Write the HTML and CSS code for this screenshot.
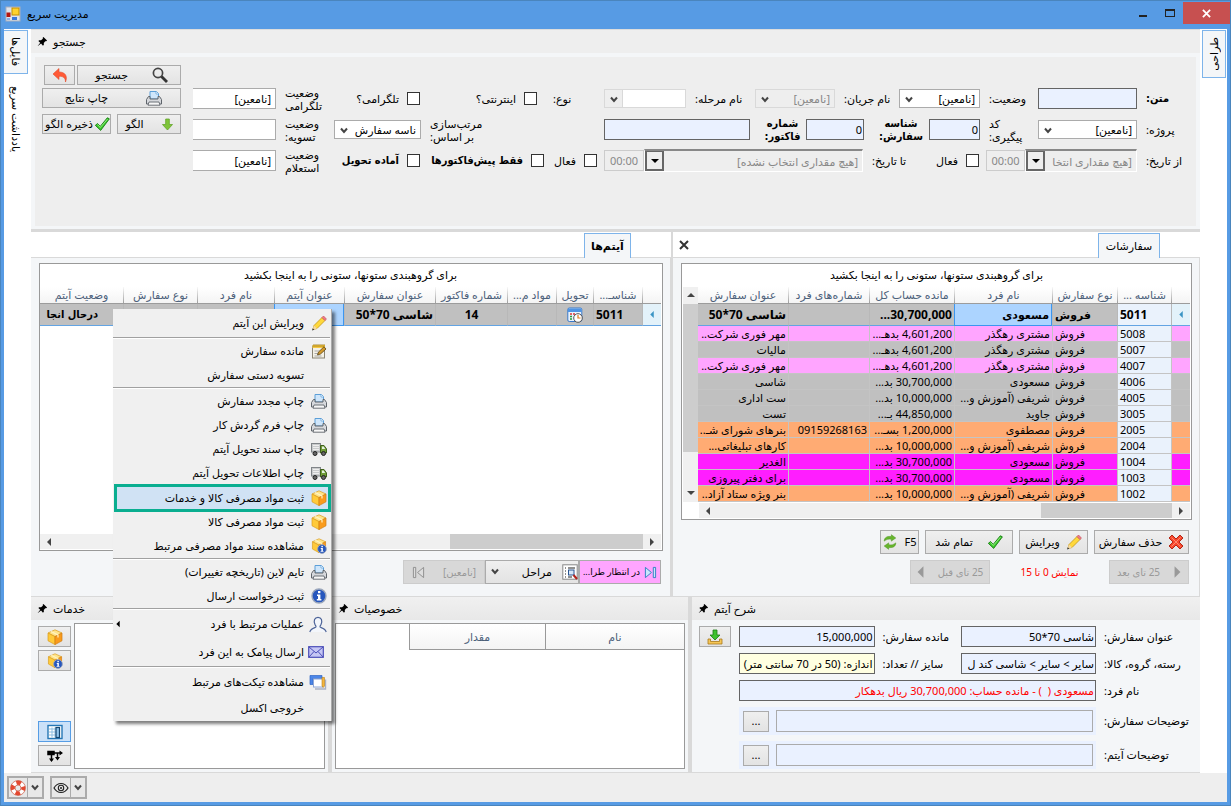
FILE: index.html
```html
<!DOCTYPE html>
<html lang="fa" dir="rtl">
<head>
<meta charset="utf-8">
<title>مدیریت سریع</title>
<link rel="stylesheet" href="styles.css">
</head>
<body>

<svg class="sprite" aria-hidden="true">
	<symbol id="i-app" viewBox="0 0 16 16"><rect x="1" y="1" width="14" height="14" fill="#dfe3ea" stroke="#a9b0bd"/><rect x="7" y="2" width="7" height="7" fill="#ffd22e" stroke="#c48f00"/><rect x="1.500" y="6.500" width="4" height="4.500" fill="#b3150f"/><rect x="7" y="11" width="5" height="3" fill="#3a78dc"/><path d="M2 13h3" stroke="#3a78dc"/></symbol>
	<symbol id="i-pin" viewBox="0 0 12 12"><path d="M7 1l4 4-1 .8-1-.2-1.600 2 .1 2L6.500 10.500 4.400 8.300 1 11 .8 10.800 3.500 7.400 1.500 5.500 2.400 4.600l2 .1 2-1.700L6.200 1.900z" fill="#000"/></symbol>
	<symbol id="i-undo" viewBox="0 0 16 16"><path d="M1 7l6-5.500V5c6 0 9 4 6.500 10C13.500 10.500 11 9.300 7 9.300v3.200z" fill="#ff5a36" stroke="#e04a2a" stroke-width=".6"/></symbol>
	<symbol id="i-search" viewBox="0 0 16 16"><circle cx="6" cy="6" r="4.600" fill="none" stroke="#444" stroke-width="1.700"/><path d="M9.500 9.500l5.500 5.500" stroke="#333" stroke-width="2.800"/></symbol>
	<symbol id="i-print" viewBox="0 0 16 16"><path d="M4 9V1.500h6.500L12.500 3.500V9z" fill="#cfe6fb" stroke="#5c9fd8"/><path d="M10 1.500V4h2.500" fill="#fff" stroke="#5c9fd8" stroke-width=".7"/><path d="M2.500 6.500h1.500V9h8V6.500h1.500l2 3v4.500h-15V9.500z" fill="#d6d8dc" stroke="#5f646b"/><path d="M3 12h10l1 3.200H2z" fill="#f7f7f7" stroke="#6d7278"/></symbol>
	<symbol id="i-down" viewBox="0 0 12 14"><path d="M4 1h4v6h3.500L6 13 .5 7H4z" fill="#7fc53a" stroke="#5fa025" stroke-width=".8"/></symbol>
	<symbol id="i-check" viewBox="0 0 18 16"><path d="M1.500 9.500L4 7.500l3 3.200L15 1l2.300 1.200L7.500 15.200z" fill="#3ccb2c" stroke="#147a10"/><path d="M4 8.500l3.100 3.400L15.200 2.500" fill="none" stroke="#a5f190" stroke-width=".9"/></symbol>
	<symbol id="i-cross" viewBox="0 0 16 16"><path d="M1 4l3-3 4 4 4-4 3 3-4 4 4 4-3 3-4-4-4 4-3-3 4-4z" fill="#f8472c" stroke="#b32716"/><path d="M3.500 3.500l9 9M12.500 3.500l-9 9" stroke="#ff9a80" stroke-width=".8"/></symbol>
	<symbol id="i-pencil" viewBox="0 0 16 16"><path d="M2 14.500L3 10.500 11 2.500l3 3-8 8z" fill="#ffd83b" stroke="#c29516" stroke-width=".8"/><path d="M11 2.500L12.500 1 15.400 4 14 5.500z" fill="#f27b86" stroke="#c5525f" stroke-width=".7"/><path d="M3 10.500l3 3-4.500 1.500z" fill="#f4d8a4"/><path d="M1 15.500l2.300-.8-1.500-1.500z" fill="#333"/></symbol>
	<symbol id="i-note" viewBox="0 0 16 16"><rect x="1.500" y="3" width="12" height="12" fill="#f4f1e6" stroke="#8b8574"/><path d="M1.500 2h12.500v3H1.500z" fill="#f6c842"/><path d="M3 1v3M5 1v3M7 1v3M9 1v3M11 1v3M13 1v3" stroke="#9b7410" stroke-width=".8"/><path d="M3.500 8h5M3.500 10.500h4M3.500 13h7" stroke="#aaa"/><path d="M6.500 12l1-3L13 3.800 15 6 9.500 11z" fill="#d3992a" stroke="#5b4415" stroke-width=".8"/></symbol>
	<symbol id="i-truck" viewBox="0 0 16 16"><rect x=".5" y="2.500" width="9" height="8.500" fill="#c9cbcc" stroke="#808488"/><path d="M2 4.500h6M2 6.500h6M2 8.500h6" stroke="#eee"/><path d="M9.500 4.500h3.500l2.500 3.500v4h-6z" fill="#6f9b37" stroke="#40611b"/><path d="M11 5.500h1.700l1.600 2.500H11z" fill="#e4f0e0"/><circle cx="4" cy="12.500" r="2" fill="#666" stroke="#222"/><circle cx="12.500" cy="12.500" r="2" fill="#666" stroke="#222"/></symbol>
	<symbol id="i-box" viewBox="0 0 16 16"><path d="M8 .8l7 3.200-7 3.600L1 4z" fill="#ffe48a" stroke="#d99b1d" stroke-width=".7"/><path d="M1 4l7 3.600v8L1 11.800z" fill="#ffca3a" stroke="#d99b1d" stroke-width=".7"/><path d="M15 4L8 7.600v8l7-3.800z" fill="#f99b1c" stroke="#d07d12" stroke-width=".7"/><path d="M4 2.500l7 3.400v2.600" fill="none" stroke="#fff4c4" stroke-width="1.200"/></symbol>
	<symbol id="i-info" viewBox="0 0 16 16"><circle cx="8" cy="8" r="7" fill="#2757bd" stroke="#9aa6bb" stroke-width="1.400"/><rect x="7" y="3" width="2.400" height="2.200" fill="#fff"/><path d="M6 6.500h3.400V11h1v1.500H5.800V11H7V8H6z" fill="#fff"/></symbol>
	<symbol id="i-boxinfo" viewBox="0 0 16 16"><use href="#i-box" width="16" height="15"/><use href="#i-info" x="6" y="6" width="10" height="10"/></symbol>
	<symbol id="i-user" viewBox="0 0 18 16"><path d="M.8 15.500C1.500 12.500 4 11.800 6.500 10.800 7.500 10.200 6.800 9.300 6 8 4.300 4.500 5.500.8 9 .8s4.700 3.700 3 7.200c-.8 1.300-1.500 2.200-.5 2.800 2.500 1 5 1.700 5.700 4.700" fill="#f3f6fb" stroke="#4c6398" stroke-width="1.200"/></symbol>
	<symbol id="i-mail" viewBox="0 0 16 12"><rect x=".7" y=".7" width="14.600" height="10.600" fill="#c5c6f4" stroke="#4a4db8" stroke-width="1.200"/><path d="M1 1l7 6 7-6M1 11l5-5.500M15 11l-5-5.500" fill="none" stroke="#4a4db8"/></symbol>
	<symbol id="i-ticket" viewBox="0 0 18 16"><path d="M1 1h12v3H4v6H1z" fill="#4c86e8" stroke="#2f66c4" stroke-width=".7"/><rect x="4.500" y="4.500" width="9" height="8" fill="#fff" stroke="#8fa7d6"/><path d="M6 14.500h10.500V5" fill="none" stroke="#a9b1c4" stroke-width="1.400"/><path d="M13 3h2.500v8.500L14.200 13 13 11.500z" fill="#f4b53d" stroke="#b7811e" stroke-width=".6"/></symbol>
	<symbol id="i-refresh" viewBox="0 0 16 18"><path d="M1.500 8C1.500 4 5 2 9.500 3V.8L14.500 4.500 9.500 8V6C6 5.300 4 6 1.500 8z" fill="#67b52c" stroke="#4c961c" stroke-width=".6"/><path d="M14.500 10c0 4-3.500 6-8 5v2.200L1.500 13.500l5-3.500v2c3.500.7 5.500 0 8-2z" fill="#67b52c" stroke="#4c961c" stroke-width=".6"/></symbol>
	<symbol id="i-import" viewBox="0 0 16 16"><path d="M1 10v5h14v-5h-2.500v2.500h-9V10z" fill="#f5c657" stroke="#a9781a" stroke-width=".8"/><path d="M6 1h4v5h3L8 11 3 6h3z" fill="#3fc12d" stroke="#1d7c14" stroke-width=".8"/></symbol>
	<symbol id="i-calendar" viewBox="0 0 16 16"><rect x=".8" y="1" width="14" height="13.500" rx="1.500" fill="#eaf3fd" stroke="#3978c8"/><path d="M1 1.500h13.600V5H1z" fill="#4f94e4"/><path d="M3 7h2M6 7h2" stroke="#d33" stroke-width="1.400"/><path d="M3 9.500h2M3 12h2" stroke="#2a9a3a" stroke-width="1.400"/><circle cx="11" cy="11" r="4.300" fill="#fff" stroke="#555"/><path d="M11 8v3h2.500" fill="none" stroke="#e07a18" stroke-width="1.200"/></symbol>
	<symbol id="i-find" viewBox="0 0 16 16"><rect x=".8" y=".8" width="14.400" height="14.400" fill="#fff" stroke="#888"/><path d="M3 4h1M3 7h1M3 10h1M3 13h1M6 4h7M6 13h4" stroke="#222" stroke-width="1.200"/><rect x="6.500" y="6" width="5.500" height="5" fill="#d5e6f8" stroke="#2a5590"/><path d="M11.500 11l3.500 4" stroke="#b3211a" stroke-width="2"/></symbol>
	<symbol id="i-next" viewBox="0 0 14 14"><path d="M1.500 1.500L8 7l-6.500 5.500zM10 1.500h2.500v11H10z" fill="#c8e6fb" stroke="#2d7cc0"/></symbol>
	<symbol id="i-prev" viewBox="0 0 14 14"><path d="M12.500 1.500L6 7l6.500 5.500zM4 1.500H1.500v11H4z" fill="#ddd" stroke="#8d8d8d"/></symbol>
	<symbol id="i-table" viewBox="0 0 16 15"><rect x="1" y="1" width="14" height="13" fill="#fff" stroke="#2577b5" stroke-width="1.400"/><path d="M2 4.500h7M2 7.500h7M2 10.500h7M5 3v10M8 3v10" stroke="#8dbfe3"/><rect x="9" y="3" width="3.500" height="10" fill="#8ec3ea" stroke="#14456e" stroke-width="1.200"/></symbol>
	<symbol id="i-flow" viewBox="0 0 16 12"><path d="M1 1.500h6v3H1zM7 3h7M4.500 4v7M10.500 3v6" fill="#000" stroke="#000" stroke-width="1.500"/><path d="M12.500.5L16 3l-3.500 2.500zM2 8.500h5L4.500 12zM8 7h5l-2.500 3.500z" fill="#000"/></symbol>
	<symbol id="i-help" viewBox="0 0 16 16"><circle cx="8" cy="8" r="5.300" fill="none" stroke="#fff" stroke-width="4.400"/><circle cx="8" cy="8" r="5.300" fill="none" stroke="#e5482f" stroke-width="4.200" stroke-dasharray="4.600 3.730" stroke-dashoffset="2.300"/><circle cx="8" cy="8" r="7.400" fill="none" stroke="#c9563f" stroke-width=".7"/><circle cx="8" cy="8" r="3" fill="none" stroke="#c9563f" stroke-width=".7"/></symbol>
	<symbol id="i-eye" viewBox="0 0 16 12"><path d="M1 6c3.500-6 10.500-6 14 0-3.500 6-10.500 6-14 0z" fill="none" stroke="#222" stroke-width="1.200"/><circle cx="8" cy="6" r="2.700" fill="none" stroke="#222" stroke-width="1.100"/><circle cx="8" cy="6" r="1" fill="#222"/></symbol>
	<symbol id="i-chev" viewBox="0 0 8 8"><path d="M1 1.500l3 3.500 3-3.500" fill="none" stroke="#444" stroke-width="2"/></symbol>
	<symbol id="i-left" viewBox="0 0 6 10"><path d="M5.500 0v10L.5 5z" fill="currentColor"/></symbol>
	<symbol id="i-right" viewBox="0 0 6 10"><path d="M.5 0v10l5-5z" fill="currentColor"/></symbol>
	<symbol id="i-up" viewBox="0 0 8 4"><path d="M0 4h8L4 0z" fill="#444"/></symbol>
	<symbol id="i-dn" viewBox="0 0 8 4"><path d="M0 0h8L4 4z" fill="currentColor"/></symbol>
	<symbol id="i-x" viewBox="0 0 10 10"><path d="M1 1l8 8M9 1L1 9" stroke="currentColor" stroke-width="2"/></symbol>
</svg>

<div class="window">
	<header class="titlebar">
		<svg class="icon"><use href="#i-app"/></svg>
		<h1>مدیریت سریع</h1>
		<div class="window-buttons">
			<button class="minimize" aria-label="minimize"><span></span></button>
			<button class="maximize" aria-label="maximize"><span></span></button>
			<button class="close" aria-label="close"><svg width="9" height="9"><use href="#i-x"/></svg></button>
		</div>
	</header>

	<div class="workspace">
		<nav class="rail rail-right"><button class="rail-tab active"><span>طراحی</span></button></nav>

		<main>
			<section class="panel search">
				<h2 class="panel-title">جستجو <svg class="pin"><use href="#i-pin"/></svg></h2>
				<div class="search-body">
					<form class="filters">
						<div class="filter-row row1">
							<label for="q" class="strong">متن:</label>
							<input id="q" class="blue" type="text">
							<label for="status">وضعیت:</label>
							<select id="status"><option>[نامعین]</option></select>
							<label for="flow">نام جریان:</label>
							<select id="flow" disabled><option>[نامعین]</option></select>
							<label for="stage">نام مرحله:</label>
							<select id="stage" class="flat"><option></option></select>
							<span class="caption">نوع:</span>
							<label class="check"><input type="checkbox"> اینترنتی؟</label>
							<label class="check"><input type="checkbox"> تلگرامی؟</label>
							<label for="tg">وضعیت<br>تلگرامی</label>
							<input id="tg" class="plain" type="text" value="[نامعین]">
						</div>
						<div class="filter-row row2">
							<label for="project">پروژه:</label>
							<select id="project"><option>[نامعین]</option></select>
							<label for="track">کد<br>پیگیری:</label>
							<input id="track" class="blue" type="text" value="0">
							<label for="order-id" class="strong mid">شناسه<br>سفارش:</label>
							<input id="order-id" class="blue" type="text" value="0">
							<label for="invoice" class="strong mid">شماره<br>فاکتور:</label>
							<input id="invoice" class="blue" type="text">
							<label for="sort">مرتب‌سازی<br>بر اساس:</label>
							<select id="sort"><option>ناسه سفارش</option></select>
							<label for="settle">وضعیت<br>تسویه:</label>
							<input id="settle" class="plain" type="text">
						</div>
						<div class="filter-row row3">
							<label for="from">از تاریخ:</label>
							<div class="date"><input id="from" type="text" value="[هیچ مقداری انتخا" disabled><button type="button" aria-label="از تاریخ"><svg width="8" height="4"><use href="#i-dn"/></svg></button></div>
							<input class="time" type="text" value="00:00" aria-label="ساعت" disabled>
							<label class="check"><input type="checkbox"> فعال</label>
							<label for="to">تا تاریخ:</label>
							<div class="date"><input id="to" type="text" value="[هیچ مقداری انتخاب نشده]" disabled><button type="button" aria-label="تا تاریخ"><svg width="8" height="4"><use href="#i-dn"/></svg></button></div>
							<input class="time" type="text" value="00:00" aria-label="ساعت" disabled>
							<label class="check"><input type="checkbox"> فعال</label>
							<label class="check strong"><input type="checkbox"> فقط پیش‌فاکتورها</label>
							<label class="check strong"><input type="checkbox"> آماده تحویل</label>
							<label for="inquiry">وضعیت<br>استعلام</label>
							<input id="inquiry" class="plain" type="text" value="[نامعین]">
						</div>
					</form>
					<div class="search-actions">
						<div class="line top"><button class="btn grow"><svg class="icon"><use href="#i-search"/></svg><span>جستجو</span></button><button class="btn undo" aria-label="بازگشت"><svg class="icon"><use href="#i-undo"/></svg></button></div>
						<div class="line"><button class="btn grow print"><svg class="icon"><use href="#i-print"/></svg><span>چاپ نتایج</span></button></div>
						<div class="line last"><button class="btn pattern"><svg class="arrow"><use href="#i-down"/></svg><span>الگو</span></button><button class="btn grow save"><svg class="icon"><use href="#i-check"/></svg><span>ذخیره الگو</span></button></div>
					</div>
				</div>
			</section>

			<div class="middle">
				<section class="panel orders">
					<div class="tabs"><button class="tab">سفارشات</button><button class="tab-close" aria-label="close"><svg width="10" height="10"><use href="#i-x"/></svg></button></div>
					<div class="tab-body">
						<div class="grid">
							<p class="group-hint">برای گروهبندی ستونها، ستونی را به اینجا بکشید</p>
							<div class="grid-scroll">
								<table>
									<colgroup><col class="c-mark"><col class="c-oid"><col class="c-type"><col class="c-name"><col class="c-balance"><col class="c-phone"><col></colgroup>
									<thead><tr><th></th><th>شناسه ...</th><th>نوع سفارش</th><th>نام فرد</th><th>مانده حساب کل</th><th>شماره‌های فرد</th><th>عنوان سفارش</th></tr></thead>
									<tbody>
										<tr class="selected"><td><svg width="6" height="7"><use href="#i-left"/></svg></td><td class="big-num">5011</td><td>فروش</td><td class="cell-active">مسعودی</td><td class="big-num">30,700,000...</td><td></td><td class="big-num">شاسی 70*50</td></tr>
										<tr class="pink"><td></td><td>5008</td><td>فروش</td><td>مشتری رهگذر</td><td>4,601,200 بدهـ...</td><td></td><td>مهر فوری شرکت..</td></tr>
										<tr><td></td><td>5007</td><td>فروش</td><td>مشتری رهگذر</td><td>4,601,200 بدهـ...</td><td></td><td>مالیات</td></tr>
										<tr class="pink"><td></td><td>4007</td><td>فروش</td><td>مشتری رهگذر</td><td>4,601,200 بدهـ...</td><td></td><td>مهر فوری شرکت..</td></tr>
										<tr><td></td><td>4006</td><td>فروش</td><td>مسعودی</td><td>30,700,000 بد...</td><td></td><td>شاسی</td></tr>
										<tr><td></td><td>4005</td><td>فروش</td><td>شریفی (آموزش و...</td><td>10,000,000 بد...</td><td></td><td>ست اداری</td></tr>
										<tr><td></td><td>3005</td><td>فروش</td><td>جاوید</td><td>44,850,000 بـ...</td><td></td><td>تست</td></tr>
										<tr class="orange"><td></td><td>2005</td><td>فروش</td><td>مصطفوی</td><td>1,200,000 بسـ...</td><td>09159268163</td><td>بنرهای شورای شـ..</td></tr>
										<tr class="orange"><td></td><td>2004</td><td>فروش</td><td>شریفی (آموزش و...</td><td>10,000,000 بد...</td><td></td><td>کارهای  تبلیغاتی...</td></tr>
										<tr class="magenta"><td></td><td>1004</td><td>فروش</td><td>مسعودی</td><td>30,700,000 بد...</td><td></td><td>الغدیر</td></tr>
										<tr class="magenta"><td></td><td>1003</td><td>فروش</td><td>مسعودی</td><td>30,700,000 بد...</td><td></td><td>برای دفتر پیروزی</td></tr>
										<tr class="orange"><td></td><td>1002</td><td>فروش</td><td>شریفی (آموزش و...</td><td>10,000,000 بد...</td><td></td><td>بنر ویژه ستاد آزاد..</td></tr>
									</tbody>
								</table>
								<div class="vscroll"><svg width="8" height="4"><use href="#i-up"/></svg><div class="thumb"></div><svg width="8" height="4"><use href="#i-dn"/></svg></div>
							</div>
							<div class="hscroll inset"><svg width="6" height="8"><use href="#i-right"/></svg><div class="thumb"></div><svg width="6" height="8"><use href="#i-left"/></svg></div>
						</div>
						<div class="actions">
							<button class="btn b-delete"><svg class="icon"><use href="#i-cross"/></svg><span>حذف سفارش</span></button>
							<button class="btn b-edit"><svg class="icon"><use href="#i-pencil"/></svg><span>ویرایش</span></button>
							<button class="btn b-done"><svg class="icon"><use href="#i-check"/></svg><span>تمام شد</span></button>
							<button class="btn b-f5"><span>F5</span><svg class="icon"><use href="#i-refresh"/></svg></button>
						</div>
						<div class="pager">
							<button class="btn" disabled><svg class="tri"><use href="#i-right"/></svg><span>25 تای بعد</span></button>
							<span class="range">نمایش 0 تا 15</span>
							<button class="btn" disabled><span>25 تای قبل</span><svg class="tri"><use href="#i-left"/></svg></button>
						</div>
					</div>
				</section>

				<section class="panel items">
					<div class="tabs"><button class="tab bold">آیتم‌ها</button></div>
					<div class="tab-body">
						<div class="grid">
							<p class="group-hint">برای گروهبندی ستونها، ستونی را به اینجا بکشید</p>
							<div class="grid-scroll">
								<table>
									<colgroup><col class="c-mark"><col class="c-iid"><col class="c-deliver"><col class="c-material"><col class="c-invoice"><col class="c-title"><col class="c-item"><col class="c-person"><col class="c-kind"><col></colgroup>
									<thead><tr><th></th><th>شناسـ...</th><th>تحویل</th><th>مواد م...</th><th>شماره فاکتور</th><th>عنوان سفارش</th><th>عنوان آیتم</th><th>نام فرد</th><th>نوع سفارش</th><th>وضعیت آیتم</th></tr></thead>
									<tbody>
										<tr class="selected"><td><svg width="6" height="7"><use href="#i-left"/></svg></td><td class="big-num">5011</td><td class="center"><svg class="icon"><use href="#i-calendar"/></svg></td><td></td><td class="center big-num">14</td><td class="big-num">شاسی 70*50</td><td class="cell-active"></td><td></td><td></td><td class="state">درحال انجا</td></tr>
									</tbody>
								</table>
							</div>
							<div class="hscroll"><svg width="6" height="8"><use href="#i-right"/></svg><div class="thumb"></div><svg width="6" height="8"><use href="#i-left"/></svg></div>
						</div>
						<div class="stages">
							<button class="btn waiting"><svg class="step"><use href="#i-next"/></svg><span>در انتظار طرا...</span></button>
							<button class="btn steps"><svg class="icon"><use href="#i-find"/></svg><span>مراحل</span><svg width="8" height="8"><use href="#i-chev"/></svg></button>
							<button class="btn unset" disabled><span>[نامعین]</span><svg class="step"><use href="#i-prev"/></svg></button>
						</div>
					</div>
				</section>
			</div>

			<div class="bottom">
				<section class="panel details">
					<h2 class="panel-title">شرح آیتم <svg class="pin"><use href="#i-pin"/></svg></h2>
					<div class="details-body">
						<label for="d-title">عنوان سفارش:</label>
						<input id="d-title" class="blue" type="text" value="شاسی 70*50">
						<label for="d-rest">مانده سفارش:</label>
						<input id="d-rest" class="blue" type="text" value="15,000,000">
						<button class="btn" aria-label="دریافت"><svg class="icon"><use href="#i-import"/></svg></button>

						<label for="d-cat">رسته، گروه، کالا:</label>
						<input id="d-cat" class="blue" type="text" value="سایر &gt; سایر &gt; شاسی کند ل">
						<label for="d-size">سایز // تعداد:</label>
						<input id="d-size" class="yellow" type="text" value="اندازه: (50 در 70 سانتی متر)">

						<label for="d-person" class="first">نام فرد:</label>
						<input id="d-person" class="blue red wide" type="text" value="مسعودی (  ) - مانده حساب: 30,700,000 ریال بدهکار">

						<label for="d-note1" class="first">توضیحات سفارش:</label>
						<div class="memo wide"><input id="d-note1" type="text"><button class="btn">...</button></div>

						<label for="d-note2" class="first">توضیحات آیتم:</label>
						<div class="memo wide"><input id="d-note2" type="text"><button class="btn">...</button></div>
					</div>
				</section>

				<section class="panel props">
					<h2 class="panel-title">خصوصیات <svg class="pin"><use href="#i-pin"/></svg></h2>
					<div class="props-body">
						<table class="props-table"><thead><tr><th class="p-name">نام</th><th class="p-value">مقدار</th><td></td></tr></thead></table>
					</div>
				</section>

				<section class="panel services">
					<h2 class="panel-title">خدمات <svg class="pin"><use href="#i-pin"/></svg></h2>
					<div class="services-body">
						<div class="list"></div>
						<div class="tools">
							<button class="btn" aria-label="کالا و خدمات"><svg class="icon"><use href="#i-box"/></svg></button>
							<button class="btn" aria-label="سند مواد"><svg class="icon"><use href="#i-boxinfo"/></svg></button>
							<button class="btn on push" aria-label="جدول"><svg class="icon"><use href="#i-table"/></svg></button>
							<button class="btn" aria-label="گردش"><svg class="icon"><use href="#i-flow"/></svg></button>
						</div>
					</div>
				</section>
			</div>

			<ul class="context-menu">
				<li class="tall"><button><svg><use href="#i-pencil"/></svg>ویرایش این آیتم</button></li>
				<li class="sep"></li>
				<li><button><svg><use href="#i-note"/></svg>مانده سفارش</button></li>
				<li><button><svg></svg>تسویه دستی سفارش</button></li>
				<li class="sep"></li>
				<li><button><svg><use href="#i-print"/></svg>چاپ مجدد سفارش</button></li>
				<li><button><svg><use href="#i-print"/></svg>چاپ فرم گردش کار</button></li>
				<li><button><svg><use href="#i-truck"/></svg>چاپ سند تحویل آیتم</button></li>
				<li><button><svg><use href="#i-truck"/></svg>چاپ اطلاعات تحویل آیتم</button></li>
				<li class="current"><button><svg><use href="#i-box"/></svg>ثبت مواد مصرفی کالا و خدمات</button></li>
				<li><button><svg><use href="#i-box"/></svg>ثبت مواد مصرفی کالا</button></li>
				<li><button><svg><use href="#i-boxinfo"/></svg>مشاهده سند مواد مصرفی مرتبط</button></li>
				<li class="sep"></li>
				<li><button><svg><use href="#i-print"/></svg>تایم لاین (تاریخچه تغییرات)</button></li>
				<li><button><svg><use href="#i-info"/></svg>ثبت درخواست ارسال</button></li>
				<li class="sep"></li>
				<li class="tall"><button><svg class="big"><use href="#i-user"/></svg>عملیات مرتبط با فرد<svg class="more"><use href="#i-left"/></svg></button></li>
				<li class="tall"><button><svg class="mail"><use href="#i-mail"/></svg>ارسال پیامک به این فرد</button></li>
				<li class="sep"></li>
				<li class="tall"><button><svg class="big"><use href="#i-ticket"/></svg>مشاهده  تیکت‌های مرتبط</button></li>
				<li><button><svg></svg>خروجی اکسل</button></li>
			</ul>
		</main>

		<nav class="rail rail-left">
			<button class="rail-tab active"><span>فایل‌ها</span></button>
			<button class="rail-tab"><span>یادداشت سریع</span></button>
		</nav>
	</div>

	<footer class="statusbar">
		<div class="split"><button aria-label="help"><svg width="16" height="16"><use href="#i-help"/></svg></button><button aria-label="more"><svg width="8" height="8"><use href="#i-chev"/></svg></button></div>
		<div class="split"><button aria-label="view"><svg width="16" height="12"><use href="#i-eye"/></svg></button><button aria-label="more"><svg width="8" height="8"><use href="#i-chev"/></svg></button></div>
	</footer>
</div>

</body>
</html>
```
FILE: styles.css
```css
* {
	box-sizing: border-box;
}
html, body {
	margin: 0;
	padding: 0;
	height: 100%;
}
/* Noto for digits and latin, DejaVu for the persian letters */
body, button, input, select {
	font-family: "Noto Sans", "DejaVu Sans", sans-serif;
	font-size: 11px;
	line-height: 14px;
	color: #000;
}
button, input, select {
	margin: 0;
	padding: 0;
	border-radius: 0;
}
h1, h2, p, ul {
	margin: 0;
	padding: 0;
	font-size: 11px;
	font-weight: normal;
}
ul {
	list-style: none;
}
svg {
	display: block;
	flex: none;
}
.sprite {
	position: absolute;
	width: 0;
	height: 0;
}
.icon {
	width: 16px;
	height: 16px;
}

/* window frame */
.window {
	display: flex;
	flex-direction: column;
	height: 100vh;
	min-height: 700px;
	border: 4px solid #579be4;
	border-top: 0;
	background: #fff;
	outline: 1px solid #4a85bd;
	outline-offset: -1px;
}
.titlebar {
	direction: ltr;
	display: flex;
	align-items: center;
	gap: 6px;
	flex: none;
	height: 29px;
	margin: 0 -4px;
	padding: 0 1px 2px 5px;
	background: #579be4;
	border-top: 1px solid #4a85bd;
}
.window-buttons {
	display: flex;
	align-self: flex-start;
	margin-left: auto;
	padding-top: 1px;
}
.window-buttons button {
	display: flex;
	align-items: center;
	justify-content: center;
	width: 27px;
	height: 22px;
	border: 0;
	background: none;
}
.minimize span {
	width: 8px;
	height: 2px;
	margin-top: 6px;
	background: #222;
}
.maximize span {
	width: 10px;
	height: 8px;
	border: 1px solid #222;
	border-top-width: 2px;
}
.window-buttons .close {
	width: 47px;
	background: #c75050;
	color: #fff;
}
.workspace {
	display: flex;
	flex: 1;
	min-height: 0;
}
main {
	position: relative;
	display: flex;
	flex-direction: column;
	flex: 1;
	min-width: 0;
	background: #d9d9d9;
	gap: 3px;
}
.rail {
	display: flex;
	flex-direction: column;
	align-items: flex-end;
	flex: none;
	width: 27px;
	padding-top: 1px;
	gap: 8px;
}
.rail-right {
	align-items: center;
}
.rail-tab {
	display: flex;
	align-items: center;
	justify-content: center;
	width: 24px;
	height: 74px;
	border: 1px solid transparent;
	background: none;
	writing-mode: vertical-rl;
	direction: rtl;
	white-space: nowrap;
}
.rail-tab.active {
	height: 44px;
	border-color: #7eb4ea;
	background: #f4f6f8;
}
.rail-left .active {
	border-left: 0;
}
.rail-right .active {
	height: 48px;
}
.rail-right span {
	transform: rotate(180deg);
}

/* panels */
.panel {
	display: flex;
	flex-direction: column;
	min-width: 0;
	background: #f4f6f8;
}
.panel-title {
	display: flex;
	align-items: center;
	justify-content: flex-end;
	flex: none;
	height: 23px;
	gap: 5px;
	padding-left: 6px;
	background: #eee;
}
.pin {
	width: 11px;
	height: 11px;
}
.btn {
	display: flex;
	align-items: center;
	justify-content: center;
	gap: 6px;
	height: 20px;
	padding: 0 6px;
	border: 1px solid #ababab;
	background: linear-gradient(#efefef, #e3e3e3);
	white-space: nowrap;
}
.btn:disabled {
	border-color: #ccc;
	background: #d8d8d8;
	color: #999;
}

/* search */
.search {
	flex: none;
	padding: 0 0 3px;
	border-top: 1px solid #ddd;
}
.search-body {
	display: flex;
	justify-content: space-between;
	height: 169px;
	margin: 4px 4px 0;
	padding: 0 0 0 7px;
	background: #eee;
}
.filters {
	padding-top: 26px;
}
.filter-row {
	display: grid;
	align-items: center;
	height: 31px;
}
.row1 {
	grid-template-columns: 59px 99px 58px 81px 64px 80px 69px 82px 60px 117px 95px 56px 83px;
}
.row2 {
	grid-template-columns: 59px 99px 58px 51px 65px 58px 56px 146px 183px 87px 58px 83px;
}
.row3 {
	grid-template-columns: 59px 112px 39px 56px 67px 219px 40px 53px 124px 95px 56px 83px;
}
.filter-row label, .caption {
	padding-left: 9px;
	line-height: 13px;
	text-align: left;
	white-space: nowrap;
}
.strong {
	font-family: "DejaVu Sans Condensed", "DejaVu Sans", sans-serif;
	font-weight: bold;
}
.filter-row label.mid {
	text-align: center;
}
.filter-row .check {
	display: flex;
	align-items: center;
	gap: 8px;
	padding: 0 7px 0 0;
}
input[type="checkbox"] {
	appearance: none;
	width: 13px;
	height: 13px;
	flex: none;
	border: 1px solid #333;
	background: #fff;
}
input[type="text"], select {
	width: 100%;
	min-width: 0;
	height: 21px;
	padding: 0 1px;
	border: 1px solid #ababab;
	background-color: #fff;
}
input.blue {
	border-color: #646464;
	background: #eaf1ff;
}
input.yellow {
	border-color: #646464;
	background: #ffffe1;
}
input.red {
	color: #f00;
}
input[type="text"].plain {
	border-left: 0;
	padding: 0 4px;
}
select {
	appearance: none;
	height: 19px;
	padding: 0 4px 0 16px;
	background: #fff url("data:image/svg+xml,%3Csvg xmlns='http://www.w3.org/2000/svg' width='8' height='8'%3E%3Cpath d='M1 1.500l3 3.500 3-3.500' fill='none' stroke='%23444' stroke-width='2'/%3E%3C/svg%3E") no-repeat 5px 6px;
}
select:disabled {
	border-color: #d9d9d9;
	background-color: #eee;
	color: #888;
	opacity: 1;
}
select.flat {
	border-color: #d9d9d9;
	background: url("data:image/svg+xml,%3Csvg xmlns='http://www.w3.org/2000/svg' width='8' height='8'%3E%3Cpath d='M1 1.500l3 3.500 3-3.500' fill='none' stroke='%23444' stroke-width='2'/%3E%3C/svg%3E") no-repeat 5px 6px, linear-gradient(90deg, #eee 17px, #d9d9d9 17px, #d9d9d9 18px, #fff 18px);
}
.date {
	display: flex;
	height: 23px;
	border: 1px solid #fff;
	border-top: 2px solid #888;
	background: #eee;
}
.date input[type="text"] {
	flex: 1;
	height: 20px;
	padding: 0 4px;
	border: 0;
	background: #eee;
	color: #888;
}
.date button {
	display: flex;
	align-items: center;
	justify-content: center;
	flex: none;
	width: 19px;
	height: 20px;
	border: 2px solid #666;
	border-top-width: 1px;
	background: #eee;
}
input.time {
	padding: 0;
	border-color: #ccc;
	background: #eee;
	color: #888;
	text-align: center;
}
.search-actions {
	display: flex;
	flex-direction: column;
	flex: none;
	width: 139px;
	gap: 3px;
	padding-top: 8px;
}
.line {
	display: flex;
	gap: 2px;
}
.line.top {
	padding-left: 2px;
}
.line.last {
	gap: 6px;
	margin-top: 3px;
}
.grow {
	flex: 1;
}
.search-actions .grow {
	justify-content: flex-start;
	gap: 24px;
	padding: 0 12px;
}
.search-actions .print {
	gap: 38px;
	padding: 0 18px;
}
.search-actions .save {
	gap: 1px;
	padding: 0;
}
.undo {
	width: 31px;
}
.pattern {
	width: 64px;
	gap: 18px;
}
.arrow {
	width: 11px;
	height: 13px;
}

/* tab groups with grids */
.middle {
	display: grid;
	grid-template-columns: minmax(0, 527fr) minmax(0, 640fr);
	gap: 2px;
	flex: 1;
	min-height: 0;
}
.tabs {
	display: flex;
	align-items: flex-end;
	flex: none;
	height: 26px;
	background: #fff;
	border-bottom: 1px solid #d9d9d9;
	padding: 0 40px 0 6px;
}
.tab {
	height: 25px;
	width: 62px;
	margin-bottom: -1px;
	border: 1px solid #7eb4ea;
	border-bottom: 0;
	background: #f4f6f8;
}
.bold {
	width: 47px;
	font-weight: bold;
}
.tab-close {
	margin: auto auto auto 0;
	border: 0;
	background: none;
	color: #333;
}
.tab-body {
	display: flex;
	flex-direction: column;
	flex: 1;
	min-height: 0;
	padding: 5px 7px 12px 8px;
	border-right: 1px solid #d9d9d9;
}
.grid {
	display: flex;
	flex-direction: column;
	flex: 1;
	min-height: 0;
	padding: 0 1px 1px 0;
	border: 1px solid #999;
	background: #fff;
}
.orders .grid {
	padding-left: 1px;
}
.group-hint {
	flex: none;
	height: 23px;
	line-height: 22px;
	text-align: center;
}
.grid-scroll {
	display: flex;
	flex: 1;
	min-height: 0;
	align-items: flex-start;
}
.grid table {
	flex: 1;
	width: 100%;
	table-layout: fixed;
	border-spacing: 0;
}
.grid th {
	height: 17px;
	padding: 0;
	overflow: hidden;
	border-left: 1px solid #bbb;
	border-bottom: 1px solid #999;
	border-image: linear-gradient(#fff, #999) 1;
	background: linear-gradient(#fff, #f4f4f4);
	color: #4c607a;
	font-weight: normal;
	line-height: 16px;
	white-space: nowrap;
}
.grid td {
	height: 16px;
	padding: 0 2px;
	overflow: hidden;
	border-left: 1px solid #c4c4c4;
	border-bottom: 1px solid #c4c4c4;
	background: #c0c0c0;
	line-height: 15px;
	white-space: nowrap;
}
.grid th:last-child, .grid td:last-child {
	border-left: 0;
}
.grid .pink td {
	background: #ffa5ff;
}
.grid .orange td {
	background: #ffab73;
}
.grid .magenta td {
	background: #ff1eff;
}
.orders tbody tr td:nth-child(2) {
	background: #eaf2fc;
	direction: ltr;
}
.grid td:nth-child(2) {
	text-align: left;
}
.orders td:nth-child(3) {
	text-align: left;
}
.grid tbody .selected td {
	height: 22px;
	border-left-color: #b8b8b8;
	border-bottom-color: #63a4e3;
	background: #c0c0c0;
	font-weight: bold;
	line-height: 20px;
}
.grid .selected .big-num {
	font-size: 12px;
}
.grid tbody .selected td:first-child {
	padding-right: 6px;
	background: #e3f2fa;
	color: #3a94c4;
}
.grid tbody .selected td.cell-active {
	border: 1px solid #3c96f0;
	border-top: 0;
	background: #acd4ff;
}
.grid td.center {
	padding: 0;
	text-align: center;
}
.center .icon {
	margin: 0 auto;
}
.grid .selected .state {
	padding: 0 25px 0 0;
	font-family: "DejaVu Sans Condensed", "DejaVu Sans", sans-serif;
}
.c-mark { width: 19px; }
.c-oid { width: 54px; }
.c-type { width: 65px; }
.c-name { width: 98px; }
.c-balance { width: 85px; }
.c-phone { width: 81px; }
.c-iid { width: 49px; }
.c-deliver { width: 37px; }
.c-material { width: 49px; }
.c-invoice { width: 72px; }
.c-title { width: 91px; }
.c-item { width: 70px; }
.c-person { width: 77px; }
.c-kind { width: 74px; }
.vscroll {
	display: flex;
	flex-direction: column;
	align-items: center;
	justify-content: space-between;
	align-self: stretch;
	flex: none;
	width: 15px;
	padding: 6px 0 7px;
	background: #f0f0f0;
	color: #444;
}
.vscroll .thumb {
	width: 15px;
	height: 148px;
	margin: 7px 0 auto;
	background: #cdcdcd;
}
.hscroll {
	display: flex;
	align-items: center;
	flex: none;
	height: 15px;
	padding: 0 6px;
	background: #f0f0f0;
	color: #444;
}
.inset {
	margin: 1px 0 0 16px;
}
.hscroll .thumb {
	width: 131px;
	height: 15px;
	margin: 0 6px 0 auto;
	background: #cdcdcd;
}
.items .thumb {
	width: 193px;
}
.actions {
	display: flex;
	flex: none;
	gap: 6px;
	padding: 10px 3px 0 0;
}
.actions .btn {
	height: 24px;
}
.b-delete { width: 95px; }
.b-edit { width: 69px; }
.actions .b-done {
	width: 88px;
	gap: 14px;
}
.b-f5 { width: 39px; }
.pager {
	display: flex;
	align-items: center;
	justify-content: space-between;
	flex: none;
	width: 282px;
	padding: 6px 3px 0 0;
}
.pager .btn {
	width: 80px;
	height: 24px;
	gap: 14px;
	font-size: 10px;
}
.tri {
	width: 7px;
	height: 12px;
}
.range {
	color: #f00;
	font-size: 10px;
}
.stages {
	display: flex;
	flex: none;
	padding: 9px 2px 0 0;
}
.stages .btn {
	height: 24px;
}
.stages .waiting {
	width: 82px;
	gap: 4px;
	padding: 0 2px;
	background: #ffa5ff;
	font-size: 9px;
}
.stages .steps {
	width: 94px;
	justify-content: flex-start;
	gap: 10px;
	padding: 0 0 0 3px;
}
.steps svg:last-child {
	margin: 0 auto 0 2px;
}
.stages .unset {
	width: 82px;
	gap: 18px;
	font-size: 10px;
}
.step {
	width: 13px;
	height: 13px;
}

/* bottom panels */
.bottom {
	display: grid;
	grid-template-columns: minmax(0, 508fr) minmax(0, 356fr) minmax(0, 297fr);
	gap: 4px;
	flex: none;
	height: 176px;
	border-bottom: 1px solid #d9d9d9;
}
.bottom .panel-title {
	background: linear-gradient(#f0f0f0, #e8e8e8);
}
.details-body {
	display: grid;
	grid-template-columns: 95px minmax(0, 1fr) 70px minmax(0, 1fr) 32px;
	column-gap: 8px;
	row-gap: 6px;
	align-items: center;
	padding: 6px 1px 0 7px;
}
.details-body label {
	text-align: left;
	white-space: nowrap;
}
.details-body .btn {
	height: 21px;
}
.first {
	grid-column: 1;
}
.wide {
	grid-column: 2 / 5;
}
.memo {
	display: flex;
	align-items: center;
	gap: 7px;
	height: 28px;
	padding: 0 3px 0 4px;
	background: #eaf1ff;
}
.memo input[type="text"] {
	flex: 1;
	height: 22px;
	background: #eaf1ff;
}
.memo .btn {
	width: 26px;
}
.props-body {
	flex: 1;
	margin: 3px;
	border: 1px solid #999;
	background: #fff;
}
.props-table {
	width: 100%;
	border-spacing: 0;
	table-layout: fixed;
}
.props-table th {
	height: 26px;
	padding: 0;
	border-left: 1px solid #999;
	border-bottom: 1px solid #999;
	background: linear-gradient(#fff, #f4f4f4);
	color: #4c607a;
	font-weight: normal;
}
.p-name { width: 40%; }
.p-value { width: 39%; }
.services-body {
	display: flex;
	flex: 1;
	gap: 3px;
	padding: 3px 3px 3px 7px;
}
.list {
	flex: 1;
	border: 1px solid #999;
	background: #fff;
}
.tools {
	display: flex;
	flex-direction: column;
	width: 33px;
	gap: 3px;
	padding: 3px 0;
}
.tools .btn {
	height: 21px;
}
.tools .on {
	border-color: #569de5;
	background: #cbe1f8;
}
.tools .push {
	margin-top: auto;
}

/* context menu lies over the items grid */
.context-menu {
	position: absolute;
	left: 82px;
	top: 280px;
	width: 219px;
	padding: 0 1px 1px 0;
	border-right: 1px solid #aaa;
	background: #f0f0f0;
	box-shadow: 3px 3px 3px rgba(0,0,0,0.5);
}
.context-menu button {
	display: flex;
	align-items: center;
	gap: 7px;
	width: 100%;
	height: 24px;
	padding: 0 3px;
	border: 0;
	background: none;
	white-space: nowrap;
}
.context-menu svg {
	width: 16px;
	height: 16px;
}
.context-menu .tall button {
	height: 28px;
}
.context-menu .big {
	width: 18px;
	height: 17px;
	margin-left: -2px;
}
.context-menu .mail {
	margin: 0 3px 0 -3px;
}
.context-menu .more {
	width: 4px;
	height: 8px;
	margin-right: auto;
}
.sep {
	height: 2px;
	border-top: 1px solid #a0a0a0;
	border-bottom: 1px solid #fff;
}
.current {
	margin: -1px -1px -2px 1px;
	border: 3px solid #0aae90;
	background: #d0e2f4;
}
.context-menu .current button {
	height: 22px;
	padding: 0 1px;
}

.statusbar {
	direction: ltr;
	display: flex;
	gap: 6px;
	flex: none;
	height: 29px;
	padding: 3px;
	background: #eee;
}
.split {
	display: flex;
	border: 1px solid #ababab;
}
.split button {
	display: flex;
	align-items: center;
	justify-content: center;
	width: 20px;
	border: 1px solid #ababab;
	background: #e8e8e8;
}
.split button:last-child {
	width: 15px;
	border-left: 0;
}
```
